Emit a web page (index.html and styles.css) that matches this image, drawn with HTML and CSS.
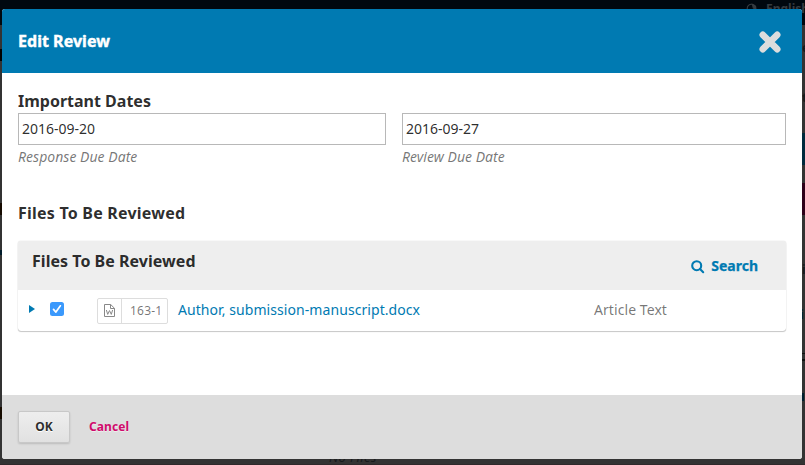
FILE: index.html
```html
<!DOCTYPE html>
<html lang="en">
<head>
<meta charset="utf-8">
<title>Edit Review</title>
<link rel="stylesheet" href="styles.css">
</head>
<body>
<div class="backdrop" aria-hidden="true">
  <div class="topbar"><svg class="globe" viewBox="0 0 12 12"><circle cx="6" cy="6" r="4.7"/><path d="M7 1.5l3.5 2v3L8 5.5z"/></svg><span class="language">English</span></div>
  <i class="mark mark-tab"></i><i class="mark mark-link"></i><i class="mark mark-row"></i><i class="mark mark-rule"></i>
  <i class="mark mark-blue"></i><i class="mark mark-pink"></i><i class="mark mark-menu"></i><i class="mark mark-item"></i><i class="mark mark-line"></i>
  <span class="edge edge-one">e</span><span class="edge edge-two">t</span><span class="edge edge-three">i</span><span class="edge edge-four">i</span>
  <em class="nofiles">No Files</em>
</div>
<main class="modal">
  <header class="modal-header">
    <h1 class="modal-title">Edit Review</h1>
    <svg class="close" viewBox="0 0 22 22"><path d="M3.8 3.8L18.2 18.2M18.2 3.8L3.8 18.2"/></svg>
  </header>
  <section class="modal-body">
    <h2 class="heading">Important Dates</h2>
    <div class="dates">
      <label class="date response"><span class="field">2016-09-20</span><span class="hint">Response Due Date</span></label>
      <label class="date review"><span class="field">2016-09-27</span><span class="hint">Review Due Date</span></label>
    </div>
    <h2 class="heading files-heading">Files To Be Reviewed</h2>
    <div class="grid">
      <div class="grid-header">
        <h3 class="grid-title">Files To Be Reviewed</h3>
        <a class="search"><svg class="search-icon" viewBox="0 0 14 14"><circle cx="5.7" cy="5.7" r="4.5"/><path d="M9 9l3.2 3.2"/></svg><span>Search</span></a>
      </div>
      <div class="grid-row">
        <svg class="expander" viewBox="0 0 6 8"><path d="M0 0l6 4-6 4z"/></svg>
        <svg class="checkbox" viewBox="0 0 14 14"><rect width="14" height="14" rx="2.5"/><path d="M3.5 7.4l2.4 2.7 4.5-6.3"/></svg>
        <span class="badge">
          <span class="badge-icon"><svg class="doc" viewBox="0 0 11 13"><path d="M.5.5h6.2l3.8 3.8v8.2H.5zM6.5.5v4h4M2.4 6l1.3 4.4L5.5 6.6l1.8 3.8L8.6 6"/></svg></span>
          <span class="badge-id">163-1</span>
        </span>
        <a class="file">Author, submission-manuscript.docx</a>
        <span class="kind">Article Text</span>
      </div>
    </div>
  </section>
  <footer class="modal-footer">
    <button class="ok">OK</button>
    <a class="cancel">Cancel</a>
  </footer>
</main>
</body>
</html>
```
FILE: styles.css
```css
* { box-sizing: border-box; }
body {
  margin: 0;
  width: 805px;
  height: 465px;
  overflow: hidden;
  background: #333;
  color: rgba(0, 0, 0, .84);
  font: 14px/20px "Noto Sans", sans-serif;
}
h1, h2, h3 { margin: 0; }
.backdrop { position: absolute; inset: 0; overflow: hidden; color: #171a1c; }
.topbar { height: 25px; background: #00080f; color: #363c41; }
.globe { position: absolute; left: 746px; top: 3px; width: 11px; height: 11px; fill: #363c41; stroke: #363c41; stroke-width: 1.2; }
.globe circle { fill: none; }
.language { position: absolute; left: 766px; top: -1px; font-size: 12px; font-weight: 700; }
.mark { position: absolute; }
.mark-tab { left: 0; top: 49px; width: 2px; height: 12px; background: #000; }
.mark-link { left: 0; top: 250px; width: 2px; height: 5px; background: #001b2a; }
.mark-row { left: 0; top: 203px; width: 2px; height: 12px; background: #160b00; }
.mark-rule { left: 0; top: 407px; width: 2px; height: 12px; background: #160b00; }
.mark-blue { left: 802px; top: 133px; width: 3px; height: 32px; background: #002a3d; }
.mark-pink { left: 802px; top: 183px; width: 3px; height: 32px; background: #2e0019; }
.mark-menu { left: 802px; top: 353px; width: 3px; height: 8px; border: solid #111; border-width: 1px 0 2px; }
.mark-item { left: 802px; top: 393px; width: 2px; height: 8px; background: #001f30; }
.mark-line { left: 0; top: 464px; width: 805px; height: 1px; background: #30292b; }
.edge { position: absolute; left: 802px; font-size: 12px; font-weight: 700; }
.edge-one { top: 38px; }
.edge-two { top: 88px; }
.edge-three { top: 260px; }
.edge-four { top: 305px; left: 800px; color: #001f30; }
.nofiles { position: absolute; left: 329px; top: 447px; font-size: 13px; letter-spacing: .35px; }
.modal {
  position: relative;
  display: flex;
  flex-direction: column;
  width: 800px;
  height: 450px;
  margin: 9px 0 0 2px;
  border-radius: 3px;
  overflow: hidden;
  background: #fff;
}
.modal-header {
  display: flex;
  align-items: center;
  justify-content: space-between;
  height: 64px;
  padding: 0 21px 0 16px;
  background: #007ab2;
}
.modal-title { color: #fff; font-size: 16px; font-weight: 700; letter-spacing: .03px; -webkit-text-stroke: .4px #fff; }
.close { width: 22px; height: 22px; margin-top: 1px; fill: none; stroke: #ddd; stroke-width: 6.6; stroke-linecap: round; }
.modal-body { flex: 1; padding: 17px 16px 0; }
.heading { font-size: 16px; line-height: 22px; font-weight: 700; }
.dates { display: flex; gap: 16px; margin-top: 1px; }
.date { display: flex; flex-direction: column; }
.response { width: 368px; }
.review { width: 384px; }
.field { height: 32px; padding: 0 3px; border: 1px solid #b8b8b8; line-height: 30px; }
.hint { margin-top: 2px; color: rgba(0, 0, 0, .54); font-style: italic; letter-spacing: .03px; }
.files-heading { margin-top: 35px; letter-spacing: .22px; }
.grid { margin-top: 17px; border-radius: 3px; box-shadow: 0 0 1px rgba(0, 0, 0, .3), 0 1px 1px rgba(0, 0, 0, .2); }
.grid-header { display: flex; justify-content: space-between; height: 49px; padding: 9px 28px 0 14px; background: #eee; border-radius: 3px 3px 0 0; }
.grid-title { font-size: 16px; line-height: 22px; letter-spacing: .03px; }
.search { display: flex; gap: 6px; height: 20px; margin-top: 6px; color: #007ab2; font-weight: 700; }
.search span { -webkit-text-stroke: .25px #007ab2; }
.search-icon { width: 14px; height: 14px; margin-top: 4px; fill: none; stroke: #007ab2; stroke-width: 2.1; stroke-linecap: round; }
.grid-row { display: flex; align-items: center; height: 41px; padding-left: 11px; }
.expander { width: 6px; height: 8px; margin-top: -3px; fill: #007ab2; }
.checkbox { width: 14px; height: 14px; margin: -3px 0 0 15px; }
.checkbox rect { fill: #3b99fc; }
.checkbox path { fill: none; stroke: #fff; stroke-width: 1.7; stroke-linecap: round; stroke-linejoin: round; }
.badge { display: flex; width: 71px; height: 26px; margin-left: 33px; border: 1px solid #ddd; border-radius: 2px; color: rgba(0, 0, 0, .54); font-size: 12px; line-height: 24px; }
.badge-icon { display: flex; align-items: center; justify-content: center; width: 24px; border-right: 1px solid #ddd; }
.doc { width: 11px; height: 13px; fill: none; stroke: #888; stroke-width: 1; }
.badge-id { flex: 1; padding-left: 8px; letter-spacing: .2px; white-space: nowrap; }
.file { width: 416px; margin: -2px 0 0 10px; color: #007ab2; letter-spacing: .07px; }
.kind { margin-top: -2px; color: rgba(0, 0, 0, .54); letter-spacing: .07px; }
.modal-footer { display: flex; align-items: center; gap: 19px; height: 64px; padding: 0 16px; background: #ddd; font-size: 12px; font-weight: 700; }
.ok { width: 52px; height: 32px; padding: 0; border: 1px solid #c8c8c8; border-radius: 2px; background: linear-gradient(#eee, #e1e1e1); box-shadow: 0 1px 2px rgba(0, 0, 0, .15); color: rgba(0, 0, 0, .84); font: inherit; text-shadow: 0 1px #fff; }
.cancel { color: #d00a6c; text-shadow: 0 1px rgba(255, 255, 255, .5); letter-spacing: .08px; }
```
